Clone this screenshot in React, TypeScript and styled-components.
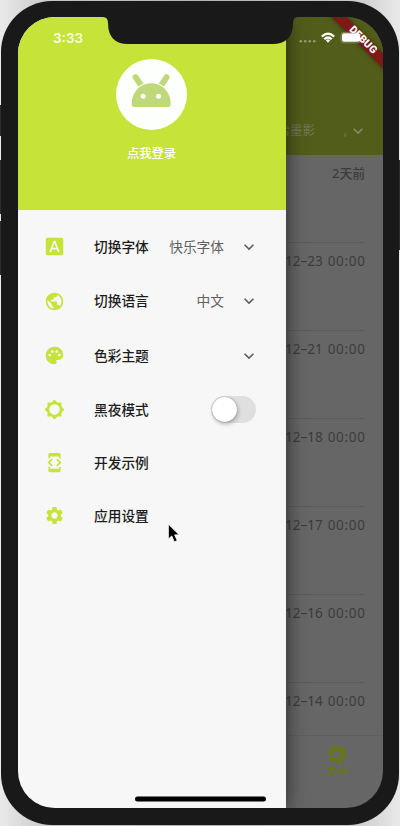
import React from 'react';
import styled, { createGlobalStyle } from 'styled-components';
import {
  MdFontDownload, MdPublic, MdPalette, MdBrightness5, MdDeveloperMode,
  MdSettings, MdCamera, MdKeyboardArrowDown,
} from 'react-icons/md';

const Global = createGlobalStyle`
  * { box-sizing: border-box; }
  body { margin: 0; overflow: hidden; font-family: "Noto Sans", "Noto Sans CJK SC", sans-serif; }
`;
const Stage = styled.div`
  position: relative; width: 400px; height: 826px; padding: 1px 1px 0;
  background: linear-gradient(90deg, #e9e9e9, #c4c4c4 14%, #b4b4b4 50%, #c4c4c4 86%, #e9e9e9);
`;
const SideButton = styled.i<{ $top: number; $height: number; $right?: boolean }>`
  position: absolute; top: ${p => p.$top}px; height: ${p => p.$height}px; width: 2px;
  ${p => (p.$right ? 'right: 0;' : 'left: 0;')} background: #2b2b2b;
`;
const Phone = styled.div`
  position: relative; width: 398px; height: 824px; padding: 16px 16px 17px 17px;
  border-radius: 51px; background: #191919;
`;
const Screen = styled.div`
  position: relative; width: 365px; height: 791px; border-radius: 37px; overflow: hidden; background: #666;
`;
const Page = styled.div`
  height: 100%; display: flex; flex-direction: column;
`;
const AppBar = styled.div`
  height: 138px; flex: none; padding: 0 15px 13px 0; background: #525d1a; color: #73765a;
  display: flex; align-items: flex-end; justify-content: flex-end; font-size: 12.5px; line-height: 22px;
  svg { width: 20px; height: 22px; color: #85886e; }
`;
const TabTail = styled.span`width: 32px; text-align: right; margin-right: 1px;`;
const List = styled.div`flex: 1; min-height: 0; overflow: hidden;`;
const Item = styled.div`
  height: 88px; margin: 0 18px; padding-top: 8px; border-bottom: 1px solid #5b5b5b;
  display: flex; justify-content: flex-end; gap: 5px; align-items: flex-start;
  font-size: 13.5px; line-height: 20px; color: #3c3c3c; white-space: nowrap;
`;
const Ago = styled.span`font-size: 12.8px; font-weight: 500;`;
const Time = styled.span`letter-spacing: 0.7px; margin-right: -0.7px;`;
const BottomNav = styled.div`
  height: 73px; flex: none; border-top: 1px solid #5f5f5f; padding: 7px 36px 0; color: #687715;
  display: flex; justify-content: flex-end;
`;
const NavItem = styled.div`
  width: 20px; display: flex; flex-direction: column; align-items: center;
  font-size: 11.3px; line-height: 12px; white-space: nowrap; font-weight: 500;
  svg { width: 22px; height: 22px; flex: none; }
`;
const Drawer = styled.aside`
  position: absolute; left: 0; top: 0; width: 268px; height: 100%; background: #f7f7f7;
  box-shadow: 1px 0 17px 1px rgba(0,0,0,.5);
`;
const Header = styled.header`
  height: 193px; padding: 41.5px 1px 0 0; background: #c5e338; color: #fff;
  display: flex; flex-direction: column; align-items: center; gap: 14.5px;
  font-size: 12.3px; line-height: 20px; font-weight: 500;
`;
const Avatar = styled.div`
  width: 71px; height: 71px; border-radius: 50%; background: #fdfffd; flex: none;
  svg { display: block; }
`;
const Menu = styled.div`padding-top: 9px;`;
const Row = styled.div<{ $height: number }>`
  height: ${p => p.$height}px; padding: 0 27px 0 26px; display: flex; align-items: center;
  font-size: 13.7px; line-height: 20px; color: #1c1c1c; white-space: nowrap;
`;
const RowIcon = styled.span`
  width: 21px; height: 21px; margin-right: 29px; color: #c5e338; flex: none;
  svg { display: block; width: 21px; height: 21px; }
`;
const Label = styled.span`flex: 1; font-weight: 500;`;
const Value = styled.span`color: #606060; margin-right: 15px;`;
const Chevron = styled.span`
  height: 20px; color: #5c5c5c; svg { display: block; width: 20px; height: 20px; }
`;
const Switch = styled.span`
  width: 45px; height: 27px; margin-right: 3px; border-radius: 14px; background: #dfdfdf; padding: 1px;
  &::before { content: ''; display: block; width: 25px; height: 25px; border-radius: 50%; background: #fff;
    box-shadow: 1px 2px 4px rgba(0,0,0,.28), 0 0 1px rgba(0,0,0,.4); }
`;
const Debug = styled.div`
  position: absolute; left: 293px; top: 16.5px; width: 100px; height: 10px; transform: rotate(45deg);
  background: #7f1819; box-shadow: 0 0 5px rgba(0,0,0,.5);
`;
const DebugText = styled.span`
  position: absolute; left: 294.5px; top: 17.5px; width: 100px; height: 10px; transform: rotate(45deg);
  color: #fff; text-align: center; font: 900 10.5px/10px Roboto, sans-serif; letter-spacing: .2px;
`;
const Overlay = styled.svg`position: absolute; left: 0; top: 0;`;
const Clock = styled.span`
  position: absolute; left: 35px; top: 12px; font: 600 13.5px/18px Inter, sans-serif; color: #faffe5;
`;

const menu = [
  { icon: <MdFontDownload />, label: '切换字体', value: '快乐字体', height: 55, control: 'expand' },
  { icon: <MdPublic />, label: '切换语言', value: '中文', height: 54, control: 'expand' },
  { icon: <MdPalette />, label: '色彩主题', value: '', height: 55, control: 'expand' },
  { icon: <MdBrightness5 />, label: '黑夜模式', value: '', height: 53, control: 'switch' },
  { icon: <MdDeveloperMode />, label: '开发示例', value: '', height: 53, control: '' },
  { icon: <MdSettings />, label: '应用设置', value: '', height: 53, control: '' },
];
const dates = ['12–23', '12–21', '12–18', '12–17', '12–16', '12–14'];

function Robot() {
  return (
    <svg width="71" height="71" viewBox="0 0 71 71">
      <path d="M19.6 18.2l6 9M50.6 18.2l-6 9" stroke="#bfd97a" strokeWidth="6" strokeLinecap="round" />
      <path d="M15.7 45.5C15.7 33 24 24.3 35.2 24.3S54.7 33 54.7 45.5Q54.7 48 52.5 48H18q-2.3 0-2.3-2.5z" fill="#bfd97a" stroke="#fdfffd" strokeWidth="2" paintOrder="stroke" />
      <circle cx="27.2" cy="37.3" r="2.5" fill="#fff" />
      <circle cx="42.5" cy="37.3" r="2.5" fill="#fff" />
    </svg>
  );
}

export default function App() {
  return (
    <Stage>
      <Global />
      <SideButton $top={105} $height={31} />
      <SideButton $top={160} $height={54} />
      <SideButton $top={221} $height={54} />
      <SideButton $top={160} $height={90} $right />
      <Phone>
        <Screen>
          <Page>
            <AppBar><span>给墨影</span><TabTail>,</TabTail><MdKeyboardArrowDown /></AppBar>
            <List>
              <Item><Ago>2天前</Ago></Item>
              {dates.map(d => <Item key={d}><span>–{d}</span><Time>00:00</Time></Item>)}
            </List>
            <BottomNav><NavItem><MdCamera />大神</NavItem></BottomNav>
          </Page>
          <Drawer>
            <Header><Avatar><Robot /></Avatar>点我登录</Header>
            <Menu>
              {menu.map(m => (
                <Row key={m.label} $height={m.height}>
                  <RowIcon>{m.icon}</RowIcon>
                  <Label>{m.label}</Label>
                  {m.value && <Value>{m.value}</Value>}
                  {m.control === 'expand' && <Chevron><MdKeyboardArrowDown /></Chevron>}
                  {m.control === 'switch' && <Switch />}
                </Row>
              ))}
            </Menu>
          </Drawer>
          <Debug />
          <Clock>3:33</Clock>
          <Overlay width="365" height="791" viewBox="18 17 365 791">
            <path d="M103 16H298V17Q293 17 293 23C293 37 286 44 272 44H128C115 44 108 37 108 23Q108 17 103 17z" fill="#191919" />
            <g fill="#9ba076">
              <circle cx="300.8" cy="41.3" r="1.2" /><circle cx="305.2" cy="41.3" r="1.2" />
              <circle cx="309.7" cy="41.3" r="1.2" /><circle cx="314.2" cy="41.3" r="1.2" />
            </g>
            <g fill="none" stroke="#fff" strokeWidth="2.2">
              <path d="M321.8 36.6q6.2-5.8 12.4 0" /><path d="M324.3 39.2q3.7-3.4 7.4 0" />
            </g>
            <path d="M325.8 40.2q2.2-1.8 4.4 0L328 42.7z" fill="#fff" />
            <rect x="341" y="32.3" width="20" height="10.5" rx="3" fill="none" stroke="#a6a488" strokeOpacity=".6" />
            <rect x="342" y="33.3" width="18" height="8.5" rx="2" fill="#fff" />
            <rect x="135" y="796.5" width="131" height="5" rx="2.5" fill="#000" />
            <path d="M168.3 524v15.2l3.4-3.2 2.6 5.9 3-1.3-2.6-5.7h4.6z" fill="#000" stroke="#fff" strokeWidth=".9" />
          </Overlay>
          <DebugText>DEBUG</DebugText>
        </Screen>
      </Phone>
    </Stage>
  );
}
